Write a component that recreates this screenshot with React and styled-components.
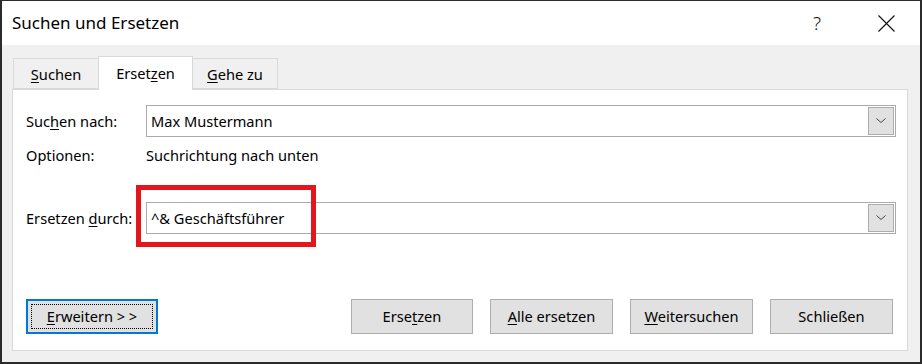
import React from "react";
import styled, { createGlobalStyle } from "styled-components";

const GlobalStyle = createGlobalStyle`
  html, body {
    margin: 0;
    padding: 0;
    background: #ffffff;
  }
  body {
    font-family: "Noto Sans", "Open Sans", sans-serif;
    color: #000;
  }
  * {
    box-sizing: border-box;
  }
`;

const Window = styled.div`
  width: 922px;
  height: 364px;
  display: flex;
  flex-direction: column;
  border-style: solid;
  border-color: #2b2b2b;
  border-width: 1px 2px 2px 2px;
  background: #f0f0f0;
`;

const TitleBar = styled.div`
  height: 44px;
  display: flex;
  align-items: center;
  background: #ffffff;
  padding-left: 10px;
`;

const Title = styled.div`
  flex: 1;
  font-size: 17px;
  padding-bottom: 2px;
`;

const TitleButton = styled.div`
  width: 50px;
  height: 44px;
  display: flex;
  align-items: center;
  justify-content: center;
  font-size: 19px;
  font-weight: 300;
  color: #111;
  margin-left: ${(p) => p.$ml || 0}px;
  margin-right: ${(p) => p.$mr || 0}px;
`;

const Body = styled.div`
  flex: 1;
  display: flex;
  flex-direction: column;
  padding: 11px 12px 11px 10px;
`;

const TabRow = styled.div`
  display: flex;
  align-items: flex-end;
  padding-left: 1px;
  position: relative;
  z-index: 1;
`;

const Tab = styled.div`
  height: ${(p) => (p.$active ? "34px" : "31px")};
  padding: ${(p) => (p.$active ? "6px" : "5px")} 0 0;
  width: ${(p) => p.$w}px;
  text-align: center;
  font-size: 14.6px;
  background: ${(p) => (p.$active ? "#ffffff" : "#f0f0f0")};
  border: 1px solid #d9d9d9;
  border-bottom: ${(p) => (p.$active ? "none" : "1px solid #d9d9d9")};
  margin-bottom: ${(p) => (p.$active ? "-1px" : "0")};
  margin-left: ${(p) => (p.$active ? "-1px" : "0")};
  margin-right: ${(p) => (p.$active ? "-1px" : "0")};
`;

const Panel = styled.div`
  flex: 1;
  background: #ffffff;
  border: 1px solid #d9d9d9;
  padding: 15px 11px 16px 13px;
  display: flex;
  flex-direction: column;
`;

const FieldRow = styled.div`
  display: grid;
  grid-template-columns: 120px 1fr;
  align-items: center;
  margin-top: ${(p) => p.$top || 0}px;
  font-size: 14.6px;
  min-height: ${(p) => p.$h || 0}px;
`;

const Label = styled.div`
  white-space: nowrap;
`;

const ComboWrap = styled.div`
  position: relative;
`;

const Combo = styled.div`
  height: 32px;
  border: 1px solid #ababab;
  display: flex;
  align-items: center;
  padding: 1px;
  background: #ffffff;
`;

const ComboText = styled.div`
  flex: 1;
  padding-left: 3px;
  white-space: nowrap;
`;

const DropButton = styled.div`
  width: 26px;
  height: 28px;
  background: #e1e1e1;
  border: 1px solid #adadad;
  display: flex;
  align-items: center;
  justify-content: center;
`;

const Highlight = styled.div`
  position: absolute;
  left: -10px;
  top: -17px;
  width: 180px;
  height: 62px;
  border: 5px solid #e3151d;
  pointer-events: none;
`;

const ButtonRow = styled.div`
  margin-top: auto;
  display: flex;
  align-items: center;
`;

const Button = styled.div`
  width: ${(p) => p.$w || 123}px;
  height: 35px;
  background: #e1e1e1;
  border: ${(p) => (p.$focus ? "2px solid #0078d7" : "1px solid #adadad")};
  display: flex;
  align-items: center;
  justify-content: center;
  font-size: 14.6px;
  margin-left: ${(p) => p.$ml || 0}px;
  position: relative;
  padding-bottom: 1px;
`;

const FocusRing = styled.div`
  position: absolute;
  inset: 3px;
  border: 1px dotted #000;
`;

const U = styled.span`
  text-decoration: underline;
  text-underline-offset: 2px;
`;

const Chevron = () => (
  <svg width="12" height="8" viewBox="0 0 12 8">
    <path d="M1.5 1.5 L6 5.5 L10.5 1.5" fill="none" stroke="#444" strokeWidth="1" />
  </svg>
);

const CloseIcon = () => (
  <svg width="17" height="17" viewBox="0 0 17 17">
    <path d="M0.5 0.5 L16.5 16.5 M16.5 0.5 L0.5 16.5" stroke="#111" strokeWidth="1.1" />
  </svg>
);

export default function App() {
  return (
    <>
      <GlobalStyle />
      <Window>
        <TitleBar>
          <Title>Suchen und Ersetzen</Title>
          <TitleButton>?</TitleButton>
          <TitleButton $ml={19} $mr={9}>
            <CloseIcon />
          </TitleButton>
        </TitleBar>
        <Body>
          <TabRow>
            <Tab $w={86}>
              <U>S</U>uchen
            </Tab>
            <Tab $w={95} $active>
              Erset<U>z</U>en
            </Tab>
            <Tab $w={86}>
              <U>G</U>ehe zu
            </Tab>
          </TabRow>
          <Panel>
            <FieldRow>
              <Label>
                Suc<U>h</U>en nach:
              </Label>
              <Combo>
                <ComboText>Max Mustermann</ComboText>
                <DropButton>
                  <Chevron />
                </DropButton>
              </Combo>
            </FieldRow>
            <FieldRow $h={36}>
              <Label>Optionen:</Label>
              <div>Suchrichtung nach unten</div>
            </FieldRow>
            <FieldRow $top={29}>
              <Label>
                Ersetzen <U>d</U>urch:
              </Label>
              <ComboWrap>
                <Combo>
                  <ComboText>^&amp; Geschäftsführer</ComboText>
                  <DropButton>
                    <Chevron />
                  </DropButton>
                </Combo>
                <Highlight />
              </ComboWrap>
            </FieldRow>
            <ButtonRow>
              <Button $w={132} $focus>
                <FocusRing />
                <span>
                  <U>E</U>rweitern &gt; &gt;
                </span>
              </Button>
              <Button $ml={193} $w={122}>
                <span>
                  Erse<U>t</U>zen
                </span>
              </Button>
              <Button $ml={17}>
                <span>
                  <U>A</U>lle ersetzen
                </span>
              </Button>
              <Button $ml={17}>
                <span>
                  <U>W</U>eitersuchen
                </span>
              </Button>
              <Button $ml={17}>Schließen</Button>
            </ButtonRow>
          </Panel>
        </Body>
      </Window>
    </>
  );
}
